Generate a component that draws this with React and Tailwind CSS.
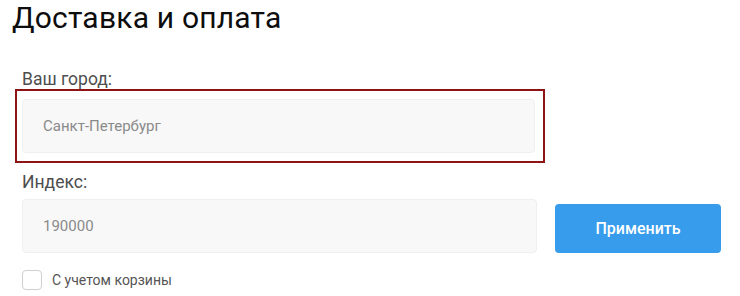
import React, { useState } from 'react';

const App = () => {
    const [city, setCity] = useState('');
    const [zip, setZip] = useState('');
    const [withCart, setWithCart] = useState(false);

    return (
        <div className="w-[740px] h-[296px] bg-white overflow-hidden" style={{ fontFamily: 'Roboto, "Noto Sans", sans-serif' }}>
            <h1 className="pl-3 text-[30px] leading-[36px] font-normal text-[#0d0d0d] tracking-[0.2px]">Доставка и оплата</h1>

            <div className="pl-[22px] mt-[33px]">
                <label className="block text-[17.5px] leading-[20px] text-[#4d4d4d]">Ваш город:</label>
            </div>
            <div className="ml-[15px] w-[530px] border-2 border-[#8e1414] pl-[5px] pr-2 py-2">
                <input
                    type="text"
                    value={city}
                    onChange={(e) => setCity(e.target.value)}
                    placeholder="Санкт-Петербург"
                    className="w-full h-[54px] bg-[#f8f8f8] border border-[#efefef] rounded pl-5 text-[15px] text-[#555] placeholder:text-[#8a8a8a] outline-none"
                />
            </div>

            <div className="pl-[22px] mt-[9px]">
                <label className="block text-[17.5px] leading-[20px] text-[#4d4d4d]">Индекс:</label>
                <div className="flex items-end gap-[18px] mt-[7px]">
                    <input
                        type="text"
                        value={zip}
                        onChange={(e) => setZip(e.target.value)}
                        placeholder="190000"
                        className="w-[515px] h-[54px] bg-[#f8f8f8] border border-[#efefef] rounded pl-5 text-[15px] text-[#555] placeholder:text-[#8a8a8a] outline-none"
                    />
                    <button className="w-[166px] h-[49px] bg-[#369ceb] rounded text-white text-[16px] font-medium">Применить</button>
                </div>
                <label className="flex items-center gap-[10px] mt-[17px] cursor-pointer">
                    <input
                        type="checkbox"
                        checked={withCart}
                        onChange={(e) => setWithCart(e.target.checked)}
                        className="appearance-none w-5 h-5 rounded border border-[#cfcfcf] bg-white"
                    />
                    <span className="text-[14px] leading-5 text-[#555]">С учетом корзины</span>
                </label>
            </div>
        </div>
    );
};

export default App;
